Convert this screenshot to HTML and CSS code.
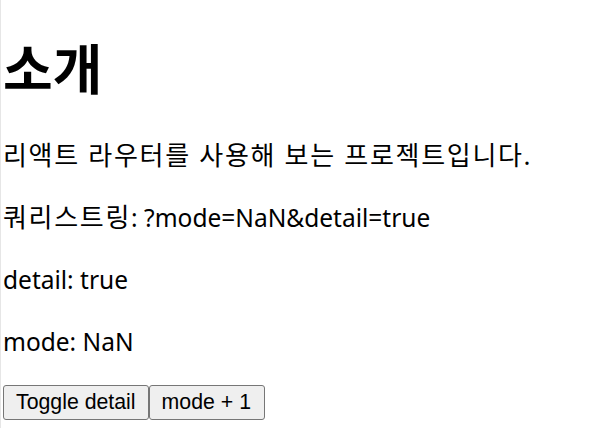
FILE: index.html
```html
<!DOCTYPE html>
<html lang="ko">
<head>
<meta charset="utf-8">
<link rel="stylesheet" href="styles.css">
</head>
<body>
<div class="page">
<h1 class="title">소개</h1>
<p class="text"><span class="ko">리액트 라우터를 사용해 보는 프로젝트입니다.</span></p>
<p class="text"><span class="ko">쿼리스트링</span>: ?mode=NaN&amp;detail=true</p>
<p class="text">detail: true</p>
<p class="text">mode: NaN</p>
<div class="actions"><button class="btn">Toggle detail</button><button class="btn">mode + 1</button></div>
</div>
</body>
</html>
```

FILE: styles.css
```css
html, body {
  margin: 0;
  padding: 0;
  background: #ffffff;
}
.page {
  border-left: 1px solid #e6e6e6;
  padding-left: 2px;
  min-height: 428px;
  box-sizing: border-box;
  overflow: hidden;
  font-family: "Noto Sans", "Noto Sans CJK KR", sans-serif;
  color: #000;
}
.title {
  font-size: 54px;
  font-weight: 700;
  line-height: 60px;
  margin: 0 0 38px 0;
  padding-top: 39px;
}
.text {
  font-size: 24.5px;
  line-height: 37px;
  margin: 0 0 25px 0;
}
.ko {
  font-size: 26px;
  line-height: 1;
  letter-spacing: 1.7px;
}
.actions {
  display: flex;
  margin-top: 4px;
}
.btn {
  font-family: "Liberation Sans", Arial, sans-serif;
  font-size: 21.3px;
  line-height: 26px;
  padding: 3px 12px 4px 12px;
  background: #efefef;
  border: 1px solid #767676;
  border-radius: 3px;
  color: #000;
}
.btn + .btn {
  padding-right: 13px;
}
```
